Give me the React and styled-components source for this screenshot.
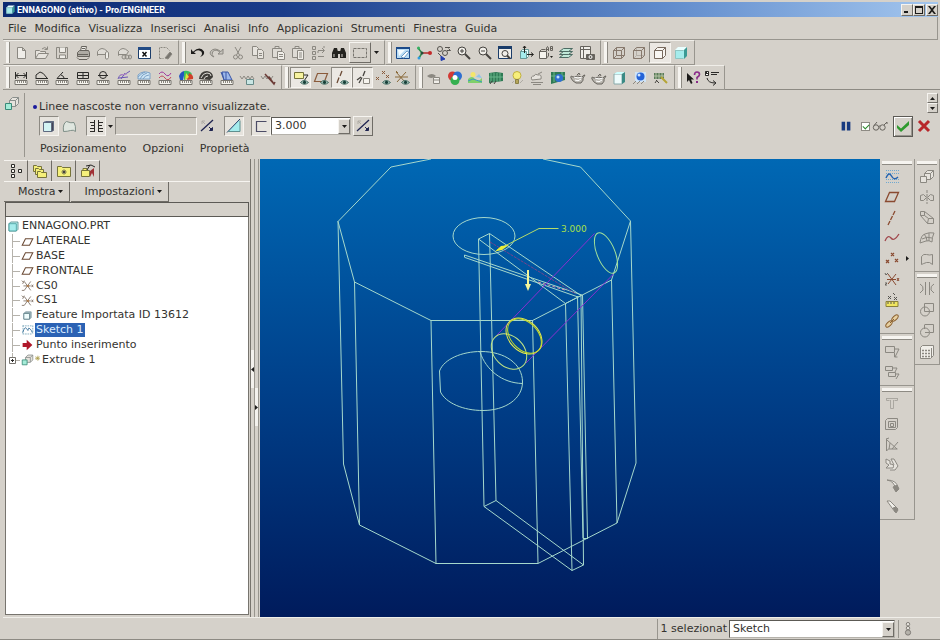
import React from "react";
import styled, { createGlobalStyle, css } from "styled-components";

const GlobalStyle = createGlobalStyle`
  * {
    box-sizing: border-box;
  }

  body {
    margin: 0;
    background: #d5d1ca;
    color: #34332f;
    font-family: "DejaVu Sans", Verdana, sans-serif;
    font-size: 11px;
    line-height: 14px;
  }

  button,
  input,
  select {
    margin: 0;
    padding: 0;
    border: 0;
    border-radius: 0;
    background: none;
    color: inherit;
    font: inherit;
  }

  ul {
    margin: 0;
    padding: 0;
    list-style: none;
  }
`;

const raised = css`
  border: 1px solid;
  border-color: #f6f4f0 #6f6c66 #6f6c66 #f6f4f0;
`;

const sunken = css`
  border: 1px solid;
  border-color: #8d8a83 #f6f4f0 #f6f4f0 #8d8a83;
`;

const Window = styled.div`
  min-height: 100vh;
  display: flex;
  flex-direction: column;
  padding: 2px 0 0 3px;
  border-bottom: 1px solid #8d8a83;
`;

const TitleBar = styled.header`
  height: 15px;
  margin-right: 2px;
  padding: 0 0 0 2px;
  display: flex;
  align-items: center;
  gap: 1px;
  flex-shrink: 0;
  background: linear-gradient(90deg, #0c2a72 0%, #1b3d8a 30%, #5f8acb 70%, #a3c6ee 100%);
  color: #fff;

  h1 {
    margin: 0;
    flex-grow: 1;
    font-family: Roboto, "DejaVu Sans", sans-serif;
    font-size: 9px;
    font-weight: bold;
    line-height: 14px;
  }
`;

const WindowButton = styled.button`
  ${raised}
  width: 12px;
  height: 12px;
  margin-right: ${(props) => (props.$gap ? "1px" : "0")};
  display: flex;
  align-items: center;
  justify-content: center;
  background: #d5d1ca;
`;

const WindowButtons = styled.div`
  display: flex;
`;

const MenuBar = styled.nav`
  height: 23px;
  margin-right: 2px;
  padding: 1px 5px 0;
  display: flex;
  align-items: center;
  gap: 8px;
  flex-shrink: 0;
  border-bottom: 1px solid #98958e;
  border-right: 1px solid #98958e;
`;

const Toolbar = styled.div`
  height: 25px;
  display: flex;
  flex-shrink: 0;
  border-bottom: 1px solid ${(props) => (props.$last ? "#8d8a83" : "transparent")};
`;

const ToolGroup = styled.div`
  width: ${(props) => props.$width};
  height: 25px;
  padding: 0 3px 0 2px;
  display: flex;
  align-items: center;
  gap: 1px;
  border: 1px solid;
  border-color: #f0eee9 #98958e #98958e transparent;

  &::before {
    content: "";
    width: 3px;
    height: 21px;
    flex-shrink: 0;
    background: #f6f4f0;
    border-right: 1px solid #8d8a83;
  }
`;

const Tools = styled.div`
  flex: 1;
  display: flex;
  align-items: center;
`;

const ToolButton = styled.button`
  flex: 1;
  min-width: 0;
  height: 21px;
  display: flex;
  align-items: center;
  justify-content: center;

  ${(props) =>
    props.$state === "pressed" &&
    css`
      ${sunken}
      background: #ebe8e3;
    `}
  ${(props) => props.$state === "raised" && raised}

  svg {
    flex-shrink: 0;
  }
`;

const ArrowButton = styled.button`
  width: 9px;
  height: 20px;
  display: flex;
  align-items: center;
  justify-content: center;
`;

const Dashboard = styled.section`
  height: 69px;
  padding-right: 2px;
  display: flex;
  flex-shrink: 0;
`;

const DashboardIcon = styled.div`
  width: 22px;
  margin: 3px 8px 2px 0;
  padding: 2px 0 0 1px;
  border-right: 1px solid #98958e;
`;

const DashboardBody = styled.div`
  flex: 1;
  padding-top: 8px;
`;

const Message = styled.p`
  height: 17px;
  margin: 0;
  display: flex;
  align-items: center;
  gap: 2px;

  &::before {
    content: "";
    width: 4px;
    height: 4px;
    border-radius: 2px;
    background: #1a1a9c;
  }
`;

const Controls = styled.div`
  height: 22px;
  padding-left: 6px;
  display: flex;
  align-items: center;
`;

const ControlButton = styled.button`
  width: 20px;
  height: 20px;
  margin-left: ${(props) => props.$gap || "0"};
  display: flex;
  align-items: center;
  justify-content: center;
  flex-shrink: 0;

  ${(props) =>
    props.$state === "pressed" &&
    css`
      ${sunken}
      background: #e6e3dd;
    `}
  ${(props) => props.$state === "raised" && raised}
`;

const DepthInput = styled.input`
  ${sunken}
  width: 82px;
  height: 18px;
  background: #ccc8c0;
`;

const SelectBox = styled.span`
  position: relative;
  display: block;
  width: ${(props) => props.$width};
  height: 18px;

  select {
    width: 100%;
    height: 100%;
    padding-left: 3px;
    appearance: none;
    background: #fff;
    border: 1px solid;
    border-color: #5c5a55 #b5b2ab #b5b2ab #5c5a55;
  }
`;

const SelectArrow = styled.span`
  ${raised}
  position: absolute;
  top: 2px;
  right: 1px;
  width: 12px;
  height: 15px;
  display: flex;
  align-items: center;
  justify-content: center;
  background: #d5d1ca;
  pointer-events: none;
`;

const PanelTabs = styled.div`
  height: 23px;
  padding-left: 7px;
  display: flex;
  align-items: center;
  gap: 16px;
`;

const DashboardEnd = styled.div`
  display: flex;
  flex-direction: column;
  align-items: flex-end;
  padding-top: 3px;
`;

const Spinner = styled.div`
  display: flex;
  flex-direction: column;

  button {
    ${raised}
    width: 11px;
    height: 10px;
    display: flex;
    align-items: center;
    justify-content: center;
  }
`;

const Actions = styled.div`
  height: 26px;
  padding-right: 6px;
  display: flex;
  align-items: center;
  gap: 2px;

  input {
    width: 9px;
    height: 9px;
    margin-left: 6px;
    appearance: none;
    background: #fff;
    border: 1px solid #8d8a83;
    display: flex;
    align-items: center;
    justify-content: center;
  }

  input:checked::before {
    content: "";
    width: 5px;
    height: 3px;
    border: solid #2a8a2a;
    border-width: 0 0 1px 1px;
    transform: rotate(-45deg);
  }

  button,
  label {
    display: flex;
    align-items: center;
    justify-content: center;
  }
`;

const AcceptButton = styled.button`
  width: 20px;
  height: 21px;
  margin: 0 1px 0 3px;
  border: 1px solid #5c5a55;
  box-shadow: inset 1px 1px 0 #fff, inset -1px -1px 0 #98958e;
`;

const Main = styled.main`
  flex: 1;
  display: flex;
`;

const SidePanel = styled.aside`
  width: 248px;
  padding: 1px 0 0 1px;
  display: flex;
  flex-direction: column;
  flex-shrink: 0;
  border-right: 1px solid #77746e;
`;

const Tabs = styled.div`
  height: 22px;
  display: flex;
  border-bottom: 1px solid #f6f4f0;

  button {
    width: 24px;
    display: flex;
    align-items: center;
    justify-content: center;
    border-right: 1px solid #6f6c66;
    border-top: 1px solid #f6f4f0;
  }
`;

const PanelMenu = styled.div`
  height: 20px;
  display: flex;
  gap: 1px;

  button {
    padding: 0 6px 0 14px;
    display: flex;
    align-items: center;
    gap: 2px;
    border: solid #6f6c66;
    border-width: 0 1px 1px 0;
  }
`;

const TreeHeader = styled.div`
  height: 15px;
  margin: 0 1px 0 1px;
  border: 1px solid #5c5a55;
`;

const TreeBox = styled.div`
  flex: 1;
  margin: 0 1px 2px 1px;
  padding-top: 2px;
  background: #fff;
  border: solid #77746e;
  border-width: 0 1px 1px 1px;
`;

const Tree = styled.ul`
  height: 148px;
  display: grid;
  grid-auto-rows: 1fr;
  padding-left: 1px;
`;

const TreeItem = styled.li`
  min-height: 0;
  display: flex;
  align-items: center;
  gap: 1px;

  span {
    padding: 0 1px;
    white-space: nowrap;
    background: ${(props) => (props.$selected ? "#2b62b4" : "transparent")};
    color: ${(props) => (props.$selected ? "#d9ecff" : "inherit")};
  }
`;

const Splitter = styled.div`
  width: 9px;
  display: flex;
  flex-shrink: 0;
  padding-right: 1px;
`;

const SplitterTrack = styled.div`
  width: 4px;
  padding-top: ${(props) => props.$top};
  border-right: 1px solid #98958e;

  button {
    width: 3px;
    height: 38px;
    display: flex;
    align-items: center;
    background: #f3f1ed;
  }
`;

const Viewport = styled.div`
  flex: 1;
  min-width: 0;
  display: flex;
  overflow: hidden;
  background: linear-gradient(180deg, #0068b4 0%, #00408a 50%, #001b5c 100%);

  svg {
    width: 100%;
    height: 100%;
  }
`;

const ToolColumn = styled.div`
  width: ${(props) => props.$width};
  flex-shrink: 0;
`;

const ColumnGroup = styled.div`
  padding: 2px;
  display: flex;
  flex-direction: column;
  border-right: 1px solid #98958e;
  border-bottom: 1px solid #98958e;

  &::before {
    content: "";
    height: 3px;
    margin-bottom: 1px;
    background: #f6f4f0;
    border-bottom: 1px solid #8d8a83;
  }
`;

const ColumnRow = styled.div`
  height: ${(props) => props.$height};
  display: grid;
  grid-auto-rows: 1fr;

  button {
    display: flex;
    align-items: center;
    padding-left: 2px;
    gap: 6px;
  }
`;

const StatusBar = styled.footer`
  height: 22px;
  display: flex;
  align-items: center;
  justify-content: flex-end;
  flex-shrink: 0;
  padding-right: 25px;
  gap: 3px;
  border-top: 1px solid #f0eee9;

  label {
    display: flex;
    align-items: center;
    gap: 2px;
    padding-left: 3px;
    border-left: 1px solid #98958e;
    height: 20px;
    white-space: nowrap;
  }
`;

const StatusLight = styled.div`
  height: 18px;
  padding-left: 2px;
  display: flex;
  align-items: center;
  border-left: 1px solid #98958e;
`;

const G = "#8b8881";
const K = "#2b2a28";
const CYAN = "#a5ecec";

const ruler = (
  <g>
    <path d="M2 10.500h12v4H2z" fill="#f6f4ee" stroke="#77746e" />
    <path d="M4.500 11v2M6.500 11v2M8.500 11v2M10.500 11v2M12.500 11v2" stroke="#8b8881" />
  </g>
);

const eye = (
  <g>
    <path d="M7.500 12.500q3.500-4 8 0q-4 3.500-8 0z" fill="#b9d3cb" stroke="#3f6b61" />
    <circle cx="11.500" cy="12.300" r="1.600" fill="#173f38" />
  </g>
);

const teapot = (
  <g stroke="#66635d" fill="#bab7b0">
    <path d="M3 7q-3-2-2 1q1 3 5 5h5q3-3 2-5l2-3q-2 0-3 2q-4-2-9 0z" />
    <path d="M4 7q4 2 8 0M5 10q3 2 6-1" fill="none" stroke="#fff" />
    <path d="M7 5l2-2 1 2" />
  </g>
);

const icons = {
  newFile: <path d="M4.500 2.500h5l3 3v8h-8zM9.500 2.500v3h3" fill="#efede8" stroke={G} />,
  open: (
    <g stroke={G} fill="#e6e3dd">
      <path d="M1.500 13.500v-8h4l1 1h5v2" />
      <path d="M1.500 13.500l3-5h10l-3 5z" />
      <path d="M8 4q3-3 5 0M13.500 1.500v3h-3" fill="none" />
    </g>
  ),
  save: (
    <g stroke={G} fill="none">
      <path d="M2.500 2.500h11v11h-11z" />
      <path d="M5.500 2.500v5h6v-5M5.500 13v-3h6v3" fill="#efede8" />
    </g>
  ),
  print: (
    <g stroke="#66635d" fill="#aeaba4">
      <path d="M5.500 6l1-4.500h5l-1 4.500" fill="#efede8" />
      <path d="M2.500 7.500l2-2h9l1 2v4h-12z" />
      <path d="M2 12.500l2 2h8l2-2M7 3.500h3M3 9.500h10" fill="none" />
    </g>
  ),
  attach: (
    <g stroke={G} fill="none">
      <path d="M2.500 10.500v-4q4-6 10 0l-2 3h-8z" fill="#dedbd5" />
      <path d="M10.500 13.500v-6q1.500-2 3 0v5q-1 3-3 1" fill="#efede8" />
    </g>
  ),
  link: (
    <g stroke={G} fill="none">
      <path d="M2.500 10.500v-4q4-6 10 0l-2 3h-8z" fill="#dedbd5" />
      <ellipse cx="8" cy="12" rx="2" ry="2" />
      <ellipse cx="11" cy="12" rx="2" ry="2" />
      <ellipse cx="14" cy="12" rx="1.500" ry="2" />
    </g>
  ),
  closeWindow: (
    <g>
      <path d="M2.500 2.500h12v11h-12z" fill="#fff" stroke="#1b3d6a" />
      <path d="M2 2h13v3H2z" fill="#234b85" />
      <path d="M6.500 7l4 4.500M10.500 7l-4 4.500" stroke="#111" strokeWidth="1.500" />
    </g>
  ),
  erase: (
    <g stroke={G} fill="none">
      <path d="M2.500 13.500v-11h7l3 3M2.500 13.500h4" strokeDasharray="2 1" />
      <path d="M8 13l5-6 2 2-4 5z" fill="#77746e" />
    </g>
  ),
  undo: (
    <path d="M2 4v5h5l-2-1.700q4-4 7.500-.5 1.500 3-1.500 5.200 5-2 4-5.500-4-6-11 .200z" fill="#1c1b1a" />
  ),
  redo: (
    <path d="M14 4v5H9l2-1.700q-4-4-7.500-.5Q2 10 5 12 0 10 1.500 6.500q4-5 10.500.200z" fill="#c9c6bf" stroke={G} />
  ),
  cut: (
    <g stroke={G} fill="none">
      <path d="M5 2l4.500 8M11 2l-4.500 8" />
      <circle cx="5.500" cy="12" r="2" />
      <circle cx="10.500" cy="12" r="2" />
    </g>
  ),
  copy: (
    <g stroke={G} fill="#e6e3dd">
      <path d="M2.500 1.500h4l2 2v7h-6z" />
      <path d="M7.500 4.500h4l2 2v7h-6zM9 8.500h3M9 10.500h3" />
    </g>
  ),
  paste: (
    <g stroke={G} fill="#dedbd5">
      <path d="M2.500 3.500h9v9h-9zM5 3.500v-2h4v2z" />
      <path d="M7.500 6.500h5l2 2v6h-7zM9 9.500h4M9 11.500h4" fill="#f0eee9" />
    </g>
  ),
  pasteSpecial: (
    <g stroke={G} fill="#dedbd5">
      <path d="M2.500 3.500h9v9h-9zM5 3.500v-2h4v2z" />
      <path d="M7.500 5.500h6v9h-6zM9 8h3M9 10h3M9 12h3" fill="#f0eee9" />
    </g>
  ),
  regenerate: (
    <g stroke={G} fill="none">
      <path d="M2.500 1.500h3v3h-3zM2.500 6.500h3v3h-3zM2.500 11.500h3v3h-3z" />
      <path d="M8 5.500h6M12 3l2.500 2.500L12 8M14 11.500H8M7 7h2M13 2h2" />
    </g>
  ),
  find: (
    <g fill="#24231f">
      <path d="M1 13V8l2-5h3l1 4v6z" />
      <path d="M15 13V8l-2-5h-3L9 7v6z" />
      <path d="M6 6h4v3H6z" />
      <path d="M3 9v3M11 9v3" stroke="#d5d1ca" />
    </g>
  ),
  selectBox: <path d="M1.500 3.500h13v9h-13z" fill="none" stroke="#77746e" strokeDasharray="3 1" />,
  repaint: (
    <g>
      <path d="M1.500 2.500h13v11h-13z" fill="#b8dcf5" stroke="#1b4a8a" />
      <path d="M1 2h14v2H1z" fill="#1b4a8a" />
      <path d="M3 5h7l-6 6z" fill="#f4fbff" />
      <path d="M6 12l6-6 2 1-5 6z" fill="#fff" stroke="#6f9cc5" />
    </g>
  ),
  spinCenter: (
    <g strokeWidth="1.500" fill="none">
      <path d="M6 8l-4-5" stroke="#2a8a4a" />
      <path d="M6 8h8" stroke="#b02a2a" />
      <path d="M6 8l-3 5" stroke="#2a8a4a" />
      <circle cx="2.500" cy="3" r="1.500" fill="#35b060" stroke="none" />
      <circle cx="14" cy="8" r="2" fill="#c22a2a" stroke="none" />
      <circle cx="3" cy="13" r="1.500" fill="#2f9be0" stroke="none" />
      <circle cx="6" cy="8" r="1.500" fill="#274d3a" stroke="none" />
    </g>
  ),
  orient: (
    <g stroke="#55534e" fill="none">
      <circle cx="4" cy="4" r="2.500" />
      <circle cx="9" cy="8" r="2.500" />
      <path d="M9 2.500h5M11 5.500h3.500l-2-2M2 8l4 4" />
      <path d="M5 11l4 3-4 1.500z" fill="#2440b0" stroke="#2440b0" />
    </g>
  ),
  zoomIn: (
    <g stroke="#45433f" fill="none">
      <circle cx="6" cy="6" r="4" fill="#f0eee9" />
      <path d="M4 6h4M6 4v4" />
      <path d="M9 9l5 5" strokeWidth="2" />
    </g>
  ),
  zoomOut: (
    <g stroke="#45433f" fill="none">
      <circle cx="6" cy="6" r="4" fill="#f0eee9" />
      <path d="M4 6h4" />
      <path d="M9 9l5 5" strokeWidth="2" />
    </g>
  ),
  refit: (
    <g>
      <path d="M1.500 1.500h13v12h-13z" fill="#f0eee9" stroke="#1b3d6a" />
      <path d="M1 1h14v3H1z" fill="#1b3d6a" />
      <circle cx="8" cy="8.500" r="3" fill="none" stroke="#45433f" />
      <path d="M10 10.500l3 3" stroke="#45433f" strokeWidth="2" />
    </g>
  ),
  reorient: (
    <g>
      <path d="M2.500 6.500l2-2h6v7l-2 2h-6z" fill="#e9ffff" stroke="#6a9a98" />
      <path d="M2.500 6.500h6v7h-6z" fill={CYAN} stroke="#6a9a98" />
      <path d="M6.500 1v7M5 3l1.500-2L8 3M9 9.500h6M13 7.500l2.500 2-2.500 2" stroke="#24231f" fill="none" />
    </g>
  ),
  namedView: (
    <g stroke="#66635d" fill="none">
      <path d="M1.500 6.500h7v7h-7z" fill="#f6f4ee" />
      <path d="M1.500 6.500l2-2h4M8.500 13l2-2v-3" />
      <path d="M8.500 6V3l1-1.500 1 1.500v3M8.500 4.500h2M12.500 1.500v4h2v-4zM12.500 3.500h2" />
      <path d="M12 11h3l-1.500 2z" fill="#24231f" stroke="none" />
    </g>
  ),
  layers: (
    <g stroke="#4d6b63" fill="#bfe8d8">
      <path d="M1.500 12.500l4-3h9l-4 3z" />
      <path d="M1.500 9.500l4-3h9l-4 3z" />
      <path d="M1.500 6.500l4-3h9l-4 3z" />
    </g>
  ),
  snapshot: (
    <g stroke="#66635d" fill="none">
      <path d="M1.500 1.500h10v12h-10zM1.500 4.500h10M4.500 1.500v12" fill="#f0eee9" />
      <path d="M7.500 9.500h8v5h-8z" fill="#66635d" />
      <circle cx="11.500" cy="12" r="1.500" stroke="#fff" />
    </g>
  ),
  wireframe: (
    <path
      d="M2.500 5.500h8v8h-8zM5.500 2.500h8v8h-8zM2.500 5.500l3-3M10.500 5.500l3-3M10.500 13.500l3-3M2.500 13.500l3-3"
      fill="none"
      stroke="#87796d"
    />
  ),
  hiddenLine: (
    <g fill="none" stroke="#87796d">
      <path d="M5.500 3v7.500h8M2.500 13.500l3-3" stroke="#b5afa7" />
      <path d="M2.500 5.500h8v8h-8zM2.500 5.500l3-3h8v8l-3 3M10.500 5.500l3-3" />
    </g>
  ),
  noHidden: (
    <g fill="#f8f6f2" stroke="#77695d">
      <path d="M2.500 5.500l3-3h8v8l-3 3h-8z" />
      <path d="M2.500 5.500h8v8M10.500 5.500l3-3" fill="none" />
    </g>
  ),
  shaded: (
    <g>
      <path d="M2 5h9v9H2z" fill={CYAN} />
      <path d="M2 5l3-3h9l-3 3z" fill="#e9ffff" />
      <path d="M11 5l3-3v9l-3 3z" fill="#3a9a94" />
      <path d="M2.500 5.500h8M2.500 5v8.500h8" stroke="#8fc5c2" fill="none" />
    </g>
  ),
  distance: (
    <g>
      <path d="M2.500 2v7M13.500 2v7M3 5.500h10M5.500 3L3 5.500 5.500 8M10.500 3L13 5.500 10.500 8" stroke={K} fill="none" />
      {ruler}
    </g>
  ),
  length: (
    <g>
      <path d="M2 9V5l4-3q3 0 7 6M2 8.500h12" stroke={K} fill="none" />
      {ruler}
    </g>
  ),
  angle: (
    <g>
      <path d="M14 8.500H3L9 2M7 5q3 1 3 3" stroke={K} fill="none" />
      {ruler}
    </g>
  ),
  area: (
    <g>
      <path d="M2.500 2.500h11v6h-11zM8 2.500v6M3 5.500h10" stroke={K} fill="none" />
      {ruler}
    </g>
  ),
  diameter: (
    <g>
      <circle cx="8" cy="5" r="3.500" stroke={K} fill="none" />
      <path d="M3 5.500h10" stroke={K} />
      {ruler}
    </g>
  ),
  curvature: (
    <g>
      <path d="M2 9q2-6 6-4l6-4M3 8l9-1M5 9l4-6" stroke="#6b55b5" fill="none" />
      <path d="M4 5l7-1" stroke="#b58ac5" />
      {ruler}
    </g>
  ),
  sections: (
    <g>
      <path d="M2 5q5-5 12-2v6H2z" fill="#cfe6f5" stroke="#7ba0c5" />
      <path d="M4 9q2-5 7-6M7 9q2-4 6-4M2 7q4-4 7-5" stroke="#7ba0c5" fill="none" />
      {ruler}
    </g>
  ),
  offsetCurve: (
    <g fill="none">
      <path d="M2 4q3-4 6 0t6-1" stroke="#a23aa0" />
      <path d="M2 8q3-4 6 0t6-1" stroke="#c04a5a" />
      {ruler}
    </g>
  ),
  shadedCurvature: (
    <g>
      <path d="M1 6q2-5 6-5l-2 9H2z" fill="#2456c0" />
      <path d="M6 1q5-1 8 3l-3 4-5 2z" fill="#37c060" />
      <path d="M11 3q5 2 4 6l-6 1z" fill="#d0402a" />
      <path d="M8 3l3 4-4 3z" fill="#e8e03a" />
      {ruler}
    </g>
  ),
  reflection: (
    <g>
      <path d="M1 9q1-8 8-8 6 1 6 6l-3 3z" fill="#3f3d39" />
      <path d="M3 8q2-5 6-5t4 3M6 9q1-3 4-3" stroke="#dedbd5" fill="none" />
      {ruler}
    </g>
  ),
  draft: (
    <g>
      <path d="M3 2h6l4 8H5z" fill="#9db8ea" stroke="#3a55a5" />
      <path d="M7 2v8M2 2l3 8" stroke="#3a55a5" />
      {ruler}
    </g>
  ),
  savedAnalysis: (
    <g stroke="#8b8881" fill="none">
      <path d="M1 6l2 3 2-3 2 3 2-3 2 3 2-3 2 3" />
      <path d="M7.500 9.500h7v5h-7z" fill="#c9e6e4" stroke="#668a88" />
    </g>
  ),
  hideAnalysis: (
    <g stroke="#8b8881" fill="none">
      <path d="M1 6l2 3 2-3 2 3 2-3 2 3 2-3" />
      <path d="M5 4l9 10M9 7l5 7 1-2" stroke="#6b3a35" strokeWidth="1.500" />
    </g>
  ),
  annotation: (
    <g>
      <path d="M1.500 2.500h9v6h-9z" fill="#f7f3a0" stroke="#77743a" />
      <path d="M11 5h4l-4 6" stroke={K} fill="none" />
      {eye}
    </g>
  ),
  planes: (
    <g>
      <path d="M4.500 3.500h10l-3 8h-10z" stroke="#8a5a3a" fill="none" strokeWidth="1.200" />
      {eye}
    </g>
  ),
  axes: (
    <g>
      <path d="M9 1l-2 5M6 7.500L4 13" stroke="#6b4a35" strokeWidth="1.300" />
      {eye}
    </g>
  ),
  axisTags: (
    <g>
      <path d="M10 1l-2 5M7 7.500L4 13M2 10l4-3" stroke="#45433f" strokeWidth="1.300" />
      <path d="M8.500 8.500h6v5h-6z" fill="#f6f4ee" stroke="#8b8881" />
    </g>
  ),
  points: (
    <g>
      <path d="M7 1l3 3M10 1L7 4M1 7l3 3M4 7l-3 3M11 5l3 3M14 5l-3 3" stroke="#8a5a3a" />
      {eye}
    </g>
  ),
  csys: (
    <g>
      <path d="M2 2l9 10M12 2L3 12M1 7h13M2 1l2 2" stroke="#8a6a3a" />
      {eye}
    </g>
  ),
  visibility: (
    <g>
      <path d="M1 6q5-4 9 0q-5 4-9 0z" fill="#8b8881" />
      <path d="M7.500 7.500h6v6h-6z" fill="#f0eee9" stroke="#8b8881" />
      <path d="M8 10h5" stroke="#8b8881" />
    </g>
  ),
  palette: (
    <g>
      <circle cx="5.500" cy="6" r="4.500" fill="#d23a35" />
      <circle cx="10.500" cy="6" r="4.500" fill="#2f6fd0" />
      <circle cx="8" cy="10.500" r="4.500" fill="#35b050" />
      <circle cx="8" cy="7.500" r="2.500" fill="#fff" />
    </g>
  ),
  scene: (
    <g>
      <path d="M1 9q4-4 7 0t7-1v5H1z" fill="#7fd06a" />
      <path d="M1 11l5-2 9 3" stroke="#3f9ac0" fill="none" />
      <circle cx="6" cy="4.500" r="2.500" fill="#f5e66a" />
      <path d="M9 7l3-3 3 4z" fill="#8fc5ea" />
    </g>
  ),
  room: (
    <g>
      <path d="M1 3l7-1 7 1v8l-14 2z" fill="#2f7a55" />
      <path d="M3 3v9M6 3v9M9 3v9M12 3v8M1 7h14" stroke="#69b58a" />
      <path d="M2 14l2-3M6 14l2-3" stroke="#45433f" />
    </g>
  ),
  lamp: (
    <g>
      <circle cx="8" cy="5.500" r="4" fill="#f7ee7a" stroke="#c0b040" />
      <path d="M6.500 9.500h3v4h-3z" fill="#b5a55a" stroke="#8a8045" />
      <path d="M11 13l3-3M3 13l2-2" stroke="#aeaba4" />
    </g>
  ),
  effects: (
    <g stroke="#8b8881" fill="#e6e3dd">
      <path d="M3 10q-2-4 2-4 1-3 4-1 4-1 3 4z" />
      <path d="M9 4l4-2M2 12.500h12M4 14.500h8" />
    </g>
  ),
  perspective: (
    <g>
      <path d="M1 2h14v8l-14 4z" fill="#2f7a55" />
      <path d="M4 2v10M12 2v8M1 6h14" stroke="#69b58a" />
      <circle cx="9" cy="8" r="4" fill="#2f6fd0" />
      <circle cx="8" cy="7" r="1.500" fill="#bfe0ff" />
    </g>
  ),
  teapotA: teapot,
  teapotB: <g transform="translate(0 1)">{teapot}</g>,
  renderBox: (
    <g>
      <path d="M3 4h8v10H3z" fill="#eefcfc" stroke="#8aa" />
      <path d="M3 4l3-2h8l-3 2z" fill="#cff" />
      <path d="M11 4l3-2v10l-3 2z" fill="#3a8a84" />
    </g>
  ),
  globe: (
    <g>
      <path d="M3 2h11v10H3z" fill="#cfe4f7" />
      <path d="M1 14l3-3M5 14l3-3M9 14l3-3" stroke="#8b8881" />
      <circle cx="8.500" cy="6.500" r="4" fill="#2463d8" />
      <circle cx="7" cy="5" r="1.500" fill="#cfe4ff" />
    </g>
  ),
  modelCheck: (
    <g>
      <path d="M1 3h10v6H1z" fill="#5a7a5a" />
      <path d="M3 3v6M6 3v6M9 3v6M1 6h10" stroke="#b5c5a5" />
      <path d="M8 7l6 6" stroke="#b5a535" strokeWidth="2" />
      <path d="M3 10l3 3M2 13l2-3" stroke="#45433f" />
    </g>
  ),
  contextHelp: (
    <g>
      <path d="M2 3v9l2-2 2 4 1.500-1-1.500-3.500h3z" fill="#1c1b1a" />
      <path d="M9.500 5q0-3 2.500-3t2.500 2.500q0 1.500-2.500 3v2" stroke="#8a2a8a" strokeWidth="1.600" fill="none" />
      <path d="M11 11h2v2h-2z" fill="#8a2a8a" />
    </g>
  ),
  messageLog: (
    <g stroke={K} fill="none">
      <path d="M1.500 1.500h3v4h-3z" fill={K} />
      <path d="M7 2.500h8M7 4.500h6M3 8q1 5 8 5M9 10.500l3 2.500-3 2.500" />
      <path d="M3 2.500h1M2 4.500h2" stroke="#fff" />
    </g>
  ),
  extrude: (
    <g>
      <path d="M5.500 5.500l3-3h6v6l-3 3h-6z" fill="#e6e3dd" stroke="#8a8f8c" />
      <path d="M5.500 5.500h6v6M11.500 5.500l3-3" fill="none" stroke="#8a8f8c" />
      <path d="M1.500 8.500h6v6h-6z" fill="#a5ecd8" stroke="#3a8a78" />
    </g>
  ),
  solid: (
    <g stroke="#5f6a80">
      <path d="M2.500 4.500h8v9h-8z" fill="#d3f3f3" />
      <path d="M10.500 4.500l2-1v9l-2 1z" fill="#445" />
      <path d="M2.500 4.500l2-1h8" fill="none" />
    </g>
  ),
  surface: <path d="M2.500 13.500q-1-8 3-10 5 2 7.500 1 2 3 1.500 9-2-2-5-1t-7 1z" stroke="#7f8f88" fill="#dfe6df" />,
  blind: (
    <g stroke={K} fill="none">
      <path d="M6.500 2v12M2 4.500h4M3 7.500h3M2 10.500h4M2 13.500h4" />
      <path d="M10.500 2v12M11 4.500h4M11 7.500h3M11 10.500h4M11 13.500h4" />
    </g>
  ),
  flip: (
    <g stroke="#1f2450" fill="none">
      <path d="M2 13L14 2" strokeWidth="1.300" />
      <path d="M3 3l3 3M3 3h3M3 3v3" stroke="#aeaba4" />
      <path d="M10 9l3 3" />
      <path d="M13.500 12.500v-3l-3 3z" fill="#1f2450" />
    </g>
  ),
  removeMaterial: (
    <g>
      <path d="M2 13.500L12 3h2v10.500z" fill={CYAN} />
      <path d="M1 14.500L14 1" stroke="#25406a" />
      <path d="M2 13.500h12v-11" fill="none" stroke="#5f8f8f" />
    </g>
  ),
  thicken: <path d="M13.500 3.500h-10v10h10" stroke="#4c4c66" fill="none" strokeWidth="1.200" />,
  pause: <path d="M3 3h4v10H3zM9 3h4v10H9z" fill="#173a80" />,
  glasses: (
    <g stroke="#66635d" fill="none">
      <circle cx="4" cy="9.500" r="2.700" />
      <circle cx="10.500" cy="9.500" r="2.700" />
      <path d="M6.500 8.500q1-1 1.500 0M2 7.500L5 4M12 7l3-3v2" />
    </g>
  ),
  accept: <path d="M2 7l4 3.500L14 3v4l-8 7-4-4z" fill="#2f9a2f" />,
  cancel: <path d="M3 3l10 10M13 3L3 13" stroke="#b8262a" strokeWidth="3" />,
  treeTab: (
    <g stroke={K} fill="#f6f4ee">
      <path d="M3.500 1.500h3v3h-3zM3.500 6.500h3v3h-3zM3.500 11.500h3v3h-3zM10.500 6.500h3v3h-3z" />
    </g>
  ),
  folders: (
    <g stroke="#77743a" fill="#f5f07a">
      <path d="M1.500 2.500h3l1 1h4v5h-8z" />
      <path d="M3.500 5.500h3l1 1h4v5h-8z" />
      <path d="M5.500 8.500h3l1 1h5v5h-9z" />
    </g>
  ),
  favorites: (
    <g>
      <path d="M1.500 3.500h4l1 1h8v9h-13z" stroke="#77743a" fill="#f5f07a" />
      <path d="M8 6.500v5M5.500 9h5M6.500 7.500l3 3M9.500 7.500l-3 3" stroke="#45433f" />
    </g>
  ),
  connections: (
    <g>
      <path d="M1.500 7.500h8v6h-8zM3 7.500v-2h4v2" stroke="#77743a" fill="#f5f07a" />
      <path d="M6 3l5-1 4 2M10 2l-3 5" stroke={K} fill="none" />
      <path d="M10 14V8l4-3v9l-2-4z" fill="#a03035" />
    </g>
  ),
  part: (
    <g>
      <path d="M2.500 4.500l2-2h9v9l-2 2h-9z" fill="#d5ffff" stroke="#3f8080" />
      <path d="M2.500 4.500h9v9h-9z" fill={CYAN} stroke="#3f9a9a" />
    </g>
  ),
  treePlane: <path d="M5.500 4.500h9l-4 8h-9z" stroke="#6b4a35" strokeWidth="1.300" fill="#fff" />,
  treeCsys: (
    <g stroke="#77695d" fill="none">
      <path d="M4 3l8 11M12 3L4 14M3 8.500h9M1 2l2 2M4 2l-2 4M1 14h3M13 7l2 3M15 7l-2 3" />
      <path d="M7 8l3 1" stroke="#b07a45" strokeWidth="2" />
    </g>
  ),
  treeFeature: (
    <g>
      <path d="M3.500 5.500l2-2h7v7l-2 2h-7z" fill="#9fb5ba" stroke="#7f9aa2" />
      <path d="M3.500 5.500h7v7h-7z" fill="#f0fdfd" stroke="#5f7f88" />
    </g>
  ),
  treeSketch: (
    <g fill="none">
      <path d="M2 3.500h12M2 13.500h12M2.500 3v10M14.500 3v10" stroke="#6fa0b5" strokeDasharray="2 1" />
      <path d="M2 12q3-9 5-5t2 1 2-1 3 5" stroke="#2f6a95" />
    </g>
  ),
  insertHere: <path d="M2 6h5V2l7 6.500L7 15v-4H2z" fill="#b0182a" />,
  star: <path d="M4 2v7M0 5.500h7M1 3l5 5M6 3L1 8" stroke="#a5953a" />,
  sketchTool: (
    <g fill="none">
      <path d="M2 2.500h13M2 5.500h13M2 11.500h13M2 14.500h13" stroke="#6fa8d0" strokeDasharray="1 1" />
      <path d="M2 10q3-7 5.500-2t6.500 1" stroke="#2463b0" strokeWidth="1.500" />
    </g>
  ),
  datumPlane: <path d="M5.500 3.500h9l-4 9h-9z" stroke="#8a4a30" fill="none" strokeWidth="1.300" />,
  datumAxis: <path d="M11 1l-2 4M8.500 6l-2 4M6 11l-2 4" stroke="#8a4a30" strokeWidth="1.300" />,
  datumCurve: <path d="M1 11q3-7 6-3t8-4" stroke="#a0454a" fill="none" strokeWidth="1.300" />,
  datumPoint: (
    <path d="M7 2l3 3M10 2L7 5M2 9l3 3M5 9l-3 3M11 8l3 3M14 8l-3 3" stroke="#8a4a30" strokeWidth="1.200" />
  ),
  datumCsys: (
    <g fill="none" stroke="#8a4a30">
      <path d="M4 3l8 11M12 3L4 13M3 8.500h9M13 7l2 3M15 7l-2 3" />
      <path d="M1 2l1 2 2-2M1 12h2l-2 2h2" stroke="#66635d" />
    </g>
  ),
  analysisPoint: (
    <g>
      <path d="M2 9.500h12v5H2z" fill="#f0e560" stroke="#8a803a" />
      <path d="M4 10v2M7 10v2M10 10v2M4 4l3 3M7 4L4 7M9 1l2 2M10 5l3 3M13 5l-3 3" stroke="#55534e" />
    </g>
  ),
  reference: (
    <g stroke="#8a6030" fill="#e6cfa0">
      <ellipse cx="11" cy="5" rx="4" ry="2" transform="rotate(-45 11 5)" />
      <ellipse cx="5" cy="11" rx="4" ry="2" transform="rotate(-45 5 11)" />
      <path d="M6 10l4-4" />
    </g>
  ),
  note: <path d="M1.500 2.500h9v6h-9zM11 5h4l-4 8M10.500 9v4h3" stroke={G} fill="none" />,
  notes: <path d="M1.500 1.500h7v4h-7zM4.500 7.500h7v4h-7zM9 3h4l-2 4M12 9h3l-3 5" stroke={G} fill="none" />,
  hole: <path d="M2 3.500h12M2.500 3v2.500h3M13.500 3v2.500h-3M6.500 5v8.500h3V5" stroke="#aaa7a0" fill="none" />,
  shell: <path d="M3.500 2.500h10v9l-2 2h-10v-9zM4.500 5.500h7v6h-7zM6.500 7.500h3v3h-3z" stroke={G} fill="none" />,
  rib: <path d="M2.500 2v12l2-2h9M3 3l10 9M6 6l-1 6M2 2l3-1M8 12l6-7" stroke={G} fill="none" />,
  draftTool: <path d="M2 2l4 2v3q5 0 3 4H2l3-3-3-2zM7 2h3l4 7-3 4h-5M7 2l3 6" stroke={G} fill="#e6e3dd" />,
  round: (
    <g stroke={G}>
      <path d="M3 2q8 1 9 11l2-3Q13 2 3 2z" fill="#f0eee9" />
      <path d="M9 9l3 5 3-3-2-4z" fill="#8b8881" />
    </g>
  ),
  chamfer: (
    <g stroke={G}>
      <path d="M3 2h3l8 8-3 3z" fill="#f0eee9" />
      <path d="M9 9l3 5 2-3-2-3z" fill="#8b8881" />
    </g>
  ),
  extrudeTool: (
    <g stroke={G} fill="#e6e3dd">
      <path d="M5.500 5.500l3-3h6v6l-3 3h-6z" />
      <path d="M5.500 5.500h6v6M11.500 5.500l3-3" fill="none" />
      <path d="M1.500 8.500h6v6h-6z" />
    </g>
  ),
  revolve: (
    <g stroke={G} fill="none">
      <path d="M8 1v14" strokeDasharray="3 1" />
      <path d="M1.500 6.500l3-1 3 3-3 3h-3zM14.500 6.500l-3-1-3 3 3 3h3z" />
    </g>
  ),
  sweep: <path d="M1.500 2.500h4v4h-4zM5.500 2.500l9 7v5h-6l-7-8M8.500 14.500l1-5h5M5.500 6.500l4 3" stroke={G} fill="none" />,
  blend: (
    <path
      d="M1 13q1-8 5-9 4-2 9-1-2 4-2 9-3-2-6-1t-6 2zM5 4q3 3 3 7M3 9q5-3 10-1M10 3q0 4 0 8"
      stroke={G}
      fill="none"
    />
  ),
  style: <path d="M2.500 13.500v-8q2-3 5-2t6 0v10q-3-3-6-2t-5 2z" stroke={G} fill="none" />,
  mirror: <path d="M6.500 1v13M10.500 1v13M1 3q4 2 3 6l-3 3M15 3q-4 2-3 6l3 3" stroke={G} fill="none" />,
  merge: (
    <g stroke={G} fill="none">
      <path d="M5.500 1.500h9v8h-9z" />
      <circle cx="6" cy="9.500" r="4.500" />
    </g>
  ),
  trim: (
    <g stroke={G} fill="none">
      <path d="M5.500 1.500h9v8h-4" />
      <circle cx="6" cy="9.500" r="4.500" />
      <path d="M5.500 2v4M6 9.500h4" />
    </g>
  ),
  pattern: (
    <g stroke={G} fill="#f0eee9">
      <path d="M1.500 3.500l2-2h11v10l-3 3h-10z" />
      <path d="M3 6.500h9M3 9.500h9M3 12.500h9" strokeDasharray="2 1" strokeWidth="1.500" />
      <path d="M12.500 4v9" />
    </g>
  ),
  statusLight: (
    <g stroke="#77746e" fill="#e6e3dd">
      <circle cx="8" cy="2.500" r="2" />
      <circle cx="8" cy="7" r="2" />
      <circle cx="8" cy="12" r="3" fill="#b5b2ab" />
    </g>
  ),
};

function Icon({ name, size = 16 }) {
  return (
    <svg width={size} height={size} viewBox="0 0 16 16" aria-hidden="true">
      {icons[name]}
    </svg>
  );
}

function Arrow({ d, w = 5, h = 3 }) {
  return (
    <svg width={w} height={h} viewBox={`0 0 ${w} ${h}`} aria-hidden="true">
      <path d={d || "M0 0h5L2.500 3z"} fill="#1c1b1a" />
    </svg>
  );
}

const menus = [
  "File",
  "Modifica",
  "Visualizza",
  "Inserisci",
  "Analisi",
  "Info",
  "Applicazioni",
  "Strumenti",
  "Finestra",
  "Guida",
];

const firstRow = [
  {
    width: "176px",
    tools: ["newFile", "open", "save", "print", "attach", "link", "closeWindow", "erase"],
  },
  {
    width: "206px",
    arrow: true,
    tools: ["undo", "redo", "cut", "copy", "paste", "pasteSpecial", "regenerate", "find", "selectBox"],
  },
  {
    width: "216px",
    tools: [
      "repaint",
      "spinCenter",
      "orient",
      "zoomIn",
      "zoomOut",
      "refit",
      "reorient",
      "namedView",
      "layers",
      "snapshot",
    ],
  },
  { width: "94px", tools: ["wireframe", "hiddenLine", "noHidden", "shaded"] },
];

const secondRow = [
  {
    width: "279px",
    tools: [
      "distance",
      "length",
      "angle",
      "area",
      "diameter",
      "curvature",
      "sections",
      "offsetCurve",
      "shadedCurvature",
      "reflection",
      "draft",
      "savedAnalysis",
      "hideAnalysis",
    ],
  },
  { width: "134px", tools: ["annotation", "planes", "axes", "axisTags", "points", "csys"] },
  {
    width: "259px",
    tools: [
      "visibility",
      "palette",
      "scene",
      "room",
      "lamp",
      "effects",
      "perspective",
      "teapotA",
      "teapotB",
      "renderBox",
      "globe",
      "modelCheck",
    ],
  },
  { width: "50px", tools: ["contextHelp", "messageLog"] },
];

const buttonState = {
  selectBox: "raised",
  noHidden: "pressed",
  annotation: "pressed",
  axes: "pressed",
  axisTags: "pressed",
};

const treeItems = [
  { icon: "treePlane", name: "LATERALE" },
  { icon: "treePlane", name: "BASE" },
  { icon: "treePlane", name: "FRONTALE" },
  { icon: "treeCsys", name: "CS0" },
  { icon: "treeCsys", name: "CS1" },
  { icon: "treeFeature", name: "Feature Importata ID 13612" },
  { icon: "treeSketch", name: "Sketch 1", selected: true },
  { icon: "insertHere", name: "Punto inserimento" },
];

function ToolRow({ groups, last }) {
  return (
    <Toolbar $last={last}>
      {groups.map((group) => (
        <ToolGroup key={group.tools[0]} $width={group.width}>
          <Tools>
            {group.tools.map((tool) => (
              <ToolButton key={tool} aria-label={tool} $state={buttonState[tool]}>
                <Icon name={tool} />
              </ToolButton>
            ))}
          </Tools>
          {group.arrow && (
            <ArrowButton aria-label="Filtro">
              <Arrow />
            </ArrowButton>
          )}
        </ToolGroup>
      ))}
    </Toolbar>
  );
}

function FeatureDashboard() {
  return (
    <Dashboard>
      <DashboardIcon>
        <Icon name="extrude" />
      </DashboardIcon>
      <DashboardBody>
        <Message>Linee nascoste non verranno visualizzate.</Message>
        <Controls>
          <ControlButton aria-label="Solido" $state="pressed">
            <Icon name="solid" />
          </ControlButton>
          <ControlButton aria-label="Superficie">
            <Icon name="surface" />
          </ControlButton>
          <ControlButton aria-label="Cieco" $state="pressed" $gap="7px">
            <Icon name="blind" />
          </ControlButton>
          <ArrowButton aria-label="Opzioni di profondità">
            <Arrow />
          </ArrowButton>
          <DepthInput aria-label="Profondità" disabled />
          <ControlButton aria-label="Inverti profondità">
            <Icon name="flip" />
          </ControlButton>
          <ControlButton aria-label="Rimuovi materiale" $state="pressed" $gap="7px">
            <Icon name="removeMaterial" />
          </ControlButton>
          <ControlButton aria-label="Ispessisci" $state="pressed" $gap="7px">
            <Icon name="thicken" />
          </ControlButton>
          <SelectBox $width="80px">
            <select aria-label="Spessore" defaultValue="3.000">
              <option>3.000</option>
            </select>
            <SelectArrow>
              <Arrow />
            </SelectArrow>
          </SelectBox>
          <ControlButton aria-label="Inverti spessore" $state="raised" $gap="2px">
            <Icon name="flip" />
          </ControlButton>
        </Controls>
        <PanelTabs>
          <button>Posizionamento</button>
          <button>Opzioni</button>
          <button>Proprietà</button>
        </PanelTabs>
      </DashboardBody>
      <DashboardEnd>
        <Spinner>
          <button aria-label="Su">
            <Arrow d="M0 3h5L2.500 0z" />
          </button>
          <button aria-label="Giù">
            <Arrow />
          </button>
        </Spinner>
        <Actions>
          <button aria-label="Pausa">
            <Icon name="pause" size={14} />
          </button>
          <input id="preview" type="checkbox" defaultChecked />
          <label htmlFor="preview" aria-label="Anteprima">
            <Icon name="glasses" />
          </label>
          <AcceptButton aria-label="Conferma">
            <Icon name="accept" />
          </AcceptButton>
          <button aria-label="Annulla">
            <Icon name="cancel" />
          </button>
        </Actions>
      </DashboardEnd>
    </Dashboard>
  );
}

function Branch({ expandable }) {
  return (
    <svg width="13" height="14" viewBox="0 0 13 14" aria-hidden="true">
      {expandable ? (
        <g>
          <path d="M5.500 0v4M9 7.500h4" stroke="#b5b2ab" />
          <path d="M2.500 4.500h6v6h-6z" fill="#fff" stroke="#77746e" />
          <path d="M4 7.500h3M5.500 6v3" stroke={K} />
        </g>
      ) : (
        <path d="M5.500 0v14M6 7.500h7" stroke="#b5b2ab" fill="none" />
      )}
    </svg>
  );
}

function ModelTree() {
  return (
    <SidePanel>
      <Tabs>
        {["treeTab", "folders", "favorites", "connections"].map((tab) => (
          <button key={tab} aria-label={tab}>
            <Icon name={tab} />
          </button>
        ))}
      </Tabs>
      <PanelMenu>
        <button>
          Mostra <Arrow />
        </button>
        <button>
          Impostazioni <Arrow />
        </button>
      </PanelMenu>
      <TreeHeader />
      <TreeBox>
        <Tree>
          <TreeItem>
            <Icon name="part" size={13} />
            <span>ENNAGONO.PRT</span>
          </TreeItem>
          {treeItems.map((item) => (
            <TreeItem key={item.name} $selected={item.selected}>
              <Branch />
              <Icon name={item.icon} size={13} />
              <span>{item.name}</span>
            </TreeItem>
          ))}
          <TreeItem>
            <Branch expandable />
            <Icon name="extrude" size={13} />
            <svg width="5" height="12" viewBox="0 0 7 16" aria-hidden="true">
              {icons.star}
            </svg>
            <span>Extrude 1</span>
          </TreeItem>
        </Tree>
      </TreeBox>
    </SidePanel>
  );
}

function Model() {
  return (
    <svg viewBox="260 159 620 458" preserveAspectRatio="xMinYMin meet" role="img" aria-label="ENNAGONO">
      <g fill="none" stroke="#a5d8cc">
        <path d="M431 159L391 167 338 221.500 354.500 282 431 320.500H532.500L611.500 280 630.500 221 580.500 167 543 159" />
        <path d="M343.500 464L359.500 525 436 563.500H538L617 523 636 463" />
        <path d="M338 221L343.500 464M354.500 282L359.500 525M431 320L436 564M532.500 320L538 563M611.500 280L617 523M630.500 221L636 463" />
        <ellipse cx="484" cy="236" rx="31" ry="18.500" />
        <path d="M439.500 371C444 359 462 351.500 481 351.500 505 351.500 522.500 364 522.500 382 522.500 399 505 410.500 483 410.500 463 410.500 446 403 440.500 392z" />
        <path d="M480 352C486 370 502 383 522.500 383.500" />
        <path d="M478.500 239L489.500 233.500 581 295.500 565.500 303.500zM484 506.500L496 500.500 583.500 565 572 570.500z" />
        <path d="M478.500 239L484 506.500M489.500 233.500L496 500.500M581 295.500L583.500 565M565.500 303.500L572 570.500" />
        <path d="M577.500 296L583 538M582.500 295L587.500 538M583 538.500h5M464.500 255L582 295M465 257.500L578 297M464.500 255v2.500" />
      </g>
      <path d="M490 242L576 294" stroke="#77438c" strokeDasharray="3 1" />
      <path d="M538 282L565 290" stroke="#d88fb0" strokeDasharray="3 2" />
      <path d="M594.500 233.500L497 335M613.500 274L526 363" stroke="#8a2fd0" />
      <ellipse cx="606" cy="253" rx="9" ry="21.500" transform="rotate(-22 606 253)" fill="none" stroke="#a5e59a" />
      <ellipse cx="509" cy="351.500" rx="20" ry="15" transform="rotate(45 509 351.500)" fill="none" stroke="#c0e585" />
      <ellipse cx="524" cy="336" rx="20.500" ry="15" transform="rotate(45 524 336)" fill="none" stroke="#eef04a" />
      <ellipse cx="524.500" cy="336" rx="20" ry="13.500" transform="rotate(47 524.500 336)" fill="none" stroke="#c5dc2a" />
      <path d="M558.500 228.500H539L497 250" stroke="#b5dc6a" fill="none" />
      <path d="M495 251.500L501 246 509 245 502 250z" fill="#e9ee3a" />
      <path d="M528 270v16" stroke="#f5f59a" strokeWidth="2" />
      <path d="M525 284h6l-3 7z" fill="#f5f59a" />
      <text x="561" y="232" fill="#a8e04a" fontFamily="DejaVu Sans, sans-serif" fontSize="9">
        3.000
      </text>
    </svg>
  );
}

function VerticalTools({ tools, height }) {
  return (
    <ColumnGroup>
      <ColumnRow $height={height}>
        {tools.map((tool) => (
          <button key={tool} aria-label={tool}>
            <Icon name={tool} />
            {tool === "datumPoint" && <Arrow d="M0 0v5l3-2.500z" w={3} h={5} />}
          </button>
        ))}
      </ColumnRow>
    </ColumnGroup>
  );
}

export default function App() {
  return (
    <Window>
      <GlobalStyle />
      <TitleBar>
        <Icon name="shaded" size={11} />
        <h1>ENNAGONO (attivo) - Pro/ENGINEER</h1>
        <WindowButtons>
          <WindowButton aria-label="Riduci a icona">
            <Arrow d="M0 5h4v2H0z" w={6} h={7} />
          </WindowButton>
          <WindowButton aria-label="Ingrandisci" $gap>
            <Arrow d="M0 0h8v8H0zM1 2v5h6V2z" w={8} h={8} />
          </WindowButton>
          <WindowButton aria-label="Chiudi">
            <Arrow d="M0 0h2l2 2.500L6 0h2L5 4l3 4H6L4 5.500 2 8H0l3-4z" w={8} h={8} />
          </WindowButton>
        </WindowButtons>
      </TitleBar>
      <MenuBar>
        {menus.map((menu) => (
          <button key={menu}>{menu}</button>
        ))}
      </MenuBar>
      <ToolRow groups={firstRow} />
      <ToolRow groups={secondRow} last />
      <FeatureDashboard />
      <Main>
        <ModelTree />
        <Splitter>
          <SplitterTrack $top="191px">
            <button aria-label="Comprimi albero">
              <Arrow d="M3 0v5L0 2.500z" w={3} h={5} />
            </button>
          </SplitterTrack>
          <SplitterTrack $top="229px">
            <button aria-label="Espandi albero">
              <Arrow d="M0 0v5l3-2.500z" w={3} h={5} />
            </button>
          </SplitterTrack>
        </Splitter>
        <Viewport>
          <Model />
        </Viewport>
        <ToolColumn $width="35px">
          <VerticalTools
            tools={[
              "sketchTool",
              "datumPlane",
              "datumAxis",
              "datumCurve",
              "datumPoint",
              "datumCsys",
              "analysisPoint",
              "reference",
            ]}
            height="165px"
          />
          <VerticalTools tools={["note", "notes"]} height="42px" />
          <VerticalTools tools={["hole", "shell", "rib", "draftTool", "round", "chamfer"]} height="124px" />
        </ToolColumn>
        <ToolColumn $width="25px">
          <VerticalTools tools={["extrudeTool", "revolve", "sweep", "blend", "style"]} height="103px" />
          <VerticalTools tools={["mirror", "merge", "trim", "pattern"]} height="83px" />
        </ToolColumn>
      </Main>
      <StatusBar>
        <label htmlFor="filter">
          1 selezionat
          <SelectBox $width="166px">
            <select id="filter" defaultValue="Sketch">
              <option>Sketch</option>
            </select>
            <SelectArrow>
              <Arrow />
            </SelectArrow>
          </SelectBox>
        </label>
        <StatusLight>
          <Icon name="statusLight" size={14} />
        </StatusLight>
      </StatusBar>
    </Window>
  );
}
